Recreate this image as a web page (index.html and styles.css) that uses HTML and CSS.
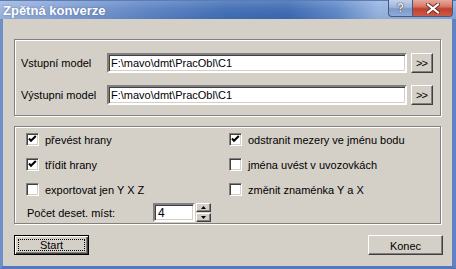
FILE: index.html
```html
<!DOCTYPE html>
<html lang="cs">
<head>
<meta charset="utf-8">
<title>Zpětná konverze</title>
<link rel="stylesheet" href="styles.css">
</head>
<body>
<div class="window">
  <div class="titlebar">
    <span class="title">Zpětná konverze</span>
    <div class="tb-buttons">
      <div class="tb-btn tb-help">?</div>
      <div class="tb-btn tb-close">
        <svg width="14" height="11" viewBox="0 0 14 11">
          <path d="M2 1.5 L12 9.5 M12 1.5 L2 9.5" stroke="#6a2a22" stroke-width="4" stroke-linecap="square"/>
          <path d="M2 1.5 L12 9.5 M12 1.5 L2 9.5" stroke="#ffffff" stroke-width="2.2" stroke-linecap="square"/>
        </svg>
      </div>
    </div>
  </div>
  <div class="frame">
    <div class="group group-files">
      <div class="file-row">
        <span class="file-label">Vstupní model</span>
        <div class="edit file-edit">F:\mavo\dmt\PracObl\C1</div>
        <div class="btn browse-btn">&gt;&gt;</div>
      </div>
      <div class="file-row">
        <span class="file-label">Výstupni model</span>
        <div class="edit file-edit">F:\mavo\dmt\PracObl\C1</div>
        <div class="btn browse-btn">&gt;&gt;</div>
      </div>
    </div>
    <div class="group group-opts">
      <div class="opts-grid">
        <div class="opt"><span class="check checked"><svg width="9" height="9" viewBox="0 0 9 9"><path d="M1 3.5 L3 5.8 L7.8 1" fill="none" stroke="#000" stroke-width="2"/></svg></span><span>převést hrany</span></div>
        <div class="opt"><span class="check checked"><svg width="9" height="9" viewBox="0 0 9 9"><path d="M1 3.5 L3 5.8 L7.8 1" fill="none" stroke="#000" stroke-width="2"/></svg></span><span>odstranit mezery ve jménu bodu</span></div>
        <div class="opt"><span class="check checked"><svg width="9" height="9" viewBox="0 0 9 9"><path d="M1 3.5 L3 5.8 L7.8 1" fill="none" stroke="#000" stroke-width="2"/></svg></span><span>třídit hrany</span></div>
        <div class="opt"><span class="check"></span><span>jména uvést v uvozovkách</span></div>
        <div class="opt"><span class="check"></span><span>exportovat jen Y X Z</span></div>
        <div class="opt"><span class="check"></span><span>změnit znaménka Y a X</span></div>
      </div>
      <div class="spin-row">
        <span class="spin-label">Počet deset. míst:</span>
        <div class="edit spin-edit">4</div>
        <div class="spin-btns">
          <div class="btn spin-btn"><svg width="5" height="3" viewBox="0 0 5 3"><path d="M2.5 0 L5 3 L0 3 Z" fill="#000"/></svg></div>
          <div class="btn spin-btn"><svg width="5" height="3" viewBox="0 0 5 3"><path d="M0 0 L5 0 L2.5 3 Z" fill="#000"/></svg></div>
        </div>
      </div>
    </div>
    <div class="actions">
      <div class="btn push-btn default-btn"><span class="focus-rect">Start</span></div>
      <div class="btn push-btn">Konec</div>
    </div>
  </div>
</div>
</body>
</html>
```

FILE: styles.css
```css
* { box-sizing: border-box; }
html, body {
  margin: 0;
  padding: 0;
  width: 456px;
  height: 269px;
  overflow: hidden;
  background: #d4d0c8;
}
body {
  font-family: "Liberation Sans", Arial, sans-serif;
  font-size: 11px;
  color: #000;
}
.window {
  width: 456px;
  height: 269px;
  display: flex;
  flex-direction: column;
}
.titlebar {
  height: 19px;
  flex: none;
  display: flex;
  align-items: flex-start;
  background:
    linear-gradient(to bottom, rgba(255,255,255,0.18) 0%, rgba(255,255,255,0.05) 45%, rgba(0,0,0,0.03) 100%),
    linear-gradient(to right, #9cb3dd 0%, #7f9dd3 14%, #5a82c2 32%, #3e6cb4 50%, #3a68b1 63%, #5d86c6 74%, #93b2df 83%, #86a6da 100%);
  border-top: 1px solid #5a7cb8;
}
.title {
  color: #fff;
  font-weight: bold;
  font-size: 13px;
  line-height: 15px;
  padding: 2px 0 0 3px;
  text-shadow: 0 0 2px rgba(40,60,110,0.55);
}
.tb-buttons {
  margin-left: auto;
  margin-right: 3px;
  display: flex;
  margin-top: -1px;
}
.tb-btn {
  height: 17px;
  border: 1px solid #48597a;
  border-top: none;
  display: flex;
  align-items: center;
  justify-content: center;
}
.tb-help {
  width: 24px;
  border-radius: 0 0 0 4px;
  border-right: none;
  background: linear-gradient(to bottom, #c3d1ea 0%, #9fb5dc 45%, #7c99cc 55%, #8eabd9 100%);
  color: #e8e8e8;
  font-weight: bold;
  font-size: 12px;
  text-shadow: 0 0 1px #333, 0 0 1px #333;
}
.tb-close {
  width: 41px;
  border-radius: 0 0 4px 0;
  background: linear-gradient(to bottom, #e6a89c 0%, #d77a6a 40%, #c0402f 55%, #cc5a48 100%);
}
.frame {
  flex: 1;
  background: #d4d0c8;
  border-left: 3px solid #6e8fc8;
  border-right: 4px solid #5e82c2;
  border-bottom: 3px solid #5378bd;
  padding: 20px 0 0 11px;
  display: flex;
  flex-direction: column;
}
.group {
  width: 427px;
  border: 1px solid #808080;
  box-shadow: inset 1px 1px #fff, 1px 1px #fff;
}
.group-files {
  padding: 13px 7px 10px 6px;
  display: flex;
  flex-direction: column;
  gap: 12px;
}
.file-row {
  display: flex;
  align-items: center;
  height: 20px;
}
.file-label {
  width: 86px;
  flex: none;
}
.edit {
  background: #fff;
  border: 2px solid;
  border-color: #808080 #fff #fff #808080;
  box-shadow: inset 1px 1px #404040, inset -1px -1px #d4d0c8;
  display: flex;
  align-items: center;
  padding-left: 2px;
  white-space: nowrap;
}
.file-edit {
  width: 300px;
  height: 20px;
}
.btn {
  background: #d4d0c8;
  border: 1px solid;
  border-color: #fff #404040 #404040 #fff;
  box-shadow: inset -1px -1px #808080;
  display: flex;
  align-items: center;
  justify-content: center;
}
.browse-btn {
  width: 22px;
  height: 20px;
  margin-left: 4px;
  letter-spacing: -1px;
  padding-right: 1px;
}
.group-opts {
  margin-top: 10px;
  height: 98px;
  padding: 0 0 0 11px;
}
.opts-grid {
  display: grid;
  grid-template-columns: 203px 1fr;
  grid-auto-rows: 25px;
}
.opt {
  display: flex;
  align-items: center;
  gap: 6px;
}
.check {
  width: 13px;
  height: 13px;
  flex: none;
  background: #fff;
  border: 1px solid;
  border-color: #808080 #fff #fff #808080;
  box-shadow: inset 1px 1px #404040, inset -1px -1px #d4d0c8;
  padding: 1px;
  display: flex;
}
.spin-row {
  display: flex;
  align-items: center;
  margin-top: 1px;
  margin-left: 1px;
  height: 19px;
}
.spin-label {
  width: 126px;
  flex: none;
}
.spin-edit {
  width: 42px;
  height: 19px;
  padding-left: 3px;
  font-size: 12px;
}
.spin-btns {
  margin-left: 1px;
  display: flex;
  flex-direction: column;
  gap: 1px;
}
.spin-btn {
  width: 15px;
  height: 9px;
}
.spin-btn svg { display: block; }
.actions {
  margin-top: 11px;
  width: 429px;
  display: flex;
  justify-content: space-between;
}
.push-btn {
  width: 75px;
  height: 20px;
  padding-top: 1px;
}
.default-btn {
  border: 1px solid #000;
  box-shadow: inset 1px 1px #fff, inset -1px -1px #404040, inset -2px -2px #808080;
  padding: 3px;
  align-items: stretch;
}
.focus-rect {
  flex: 1;
  border: 1px dotted #000;
  display: flex;
  align-items: center;
  justify-content: center;
}
```
